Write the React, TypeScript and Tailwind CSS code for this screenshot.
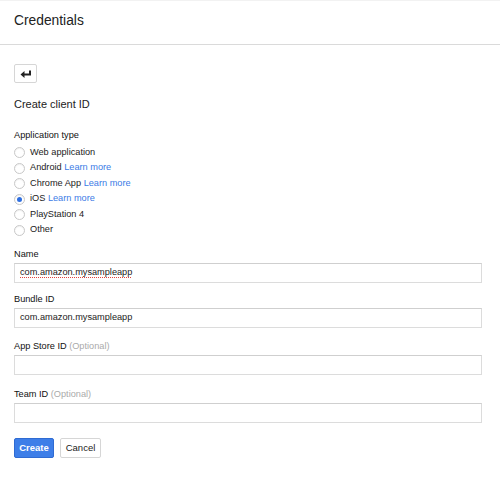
import React from "react";

const font = { fontFamily: '"Liberation Sans", Arial, Helvetica, sans-serif' };

function Radio({ checked }: { checked?: boolean }) {
  return (
    <span className="w-[11px] h-[11px] rounded-full border border-[#c8c8c8] bg-white flex items-center justify-center shrink-0 shadow-[inset_0_1px_1px_rgba(0,0,0,0.06)]">
      {checked && <span className="w-[5px] h-[5px] rounded-full bg-[#2f6fe0]" />}
    </span>
  );
}

function RadioRow({ label, link, checked }: { label: string; link?: boolean; checked?: boolean }) {
  return (
    <div className="flex items-center h-[15.5px] gap-[5px]">
      <Radio checked={checked} />
      <span className="text-[9.2px] text-[#222]">
        {label}
        {link && <span className="text-[#3b7be6]"> Learn more</span>}
      </span>
    </div>
  );
}

function Field({ label, optional, value, spell, mt }: { label: string; optional?: boolean; value?: string; spell?: boolean; mt: string }) {
  return (
    <div className={mt}>
      <div className="text-[9.2px] leading-[12px] text-[#111]">
        {label}
        {optional && <span className="text-[#aaa]"> (Optional)</span>}
      </div>
      <div className="mt-[3px] h-[20px] w-[468px] border border-[#dcdcdc] border-t-[#cfcfcf] bg-white flex items-center px-[5px] text-[9.2px] text-[#222]">
        {spell ? (
          <span className="underline decoration-dotted decoration-[#e0443e] underline-offset-[2px]">{value}</span>
        ) : (
          value
        )}
      </div>
    </div>
  );
}

export default function App() {
  return (
    <div className="w-[500px] h-[481px] bg-white relative overflow-hidden" style={font}>
      <div className="h-[45px] border-b border-[#dadada] flex items-center px-[14px] border-t border-t-[#f2f2f2]">
        <span className="text-[13.8px] text-[#222] mt-[-2px]">Credentials</span>
      </div>
      <div className="px-[14px]">
        <div className="mt-[19px] w-[23px] h-[19px] border border-[#d6d6d6] rounded-[2px] bg-white flex items-center justify-center">
          <svg width="12" height="9" viewBox="0 0 12 9">
            <path d="M0.5 5.5 L4.5 2 L4.5 4.5 L9 4.5 L9 1.5 L11 1.5 L11 6.5 L4.5 6.5 L4.5 9 Z" fill="#222" />
          </svg>
        </div>
        <div className="mt-[14px] text-[11px] text-[#222] leading-[14px]">Create client ID</div>
        <div className="mt-[18px] text-[9.2px] leading-[12px] text-[#111]">Application type</div>
        <div className="mt-[4px] flex flex-col">
          <RadioRow label="Web application" />
          <RadioRow label="Android" link />
          <RadioRow label="Chrome App" link />
          <RadioRow label="iOS" link checked />
          <RadioRow label="PlayStation 4" />
          <RadioRow label="Other" />
        </div>
        <Field mt="mt-[10px]" label="Name" value="com.amazon.mysampleapp" spell />
        <Field mt="mt-[10px]" label="Bundle ID" value="com.amazon.mysampleapp" />
        <Field mt="mt-[12px]" label="App Store ID" optional />
        <Field mt="mt-[13px]" label="Team ID" optional />
        <div className="mt-[15px] flex gap-[6px]">
          <button className="h-[20px] w-[40px] rounded-[2px] bg-[#3d7ee8] border border-[#2f6bd2] text-white text-[9.5px] font-bold">
            Create
          </button>
          <button className="h-[20px] w-[41px] rounded-[2px] bg-white border border-[#d6d6d6] text-[#222] text-[9.5px]">
            Cancel
          </button>
        </div>
      </div>
    </div>
  );
}
